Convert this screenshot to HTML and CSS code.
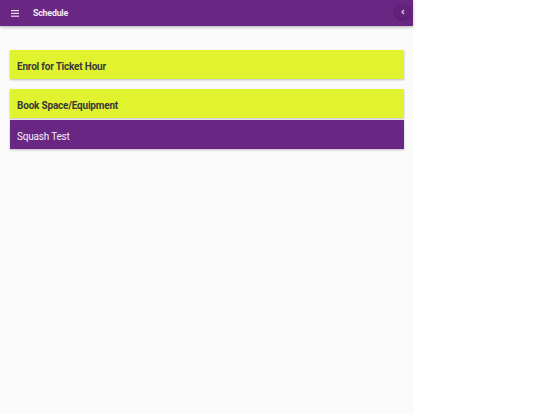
FILE: index.html
```
<!DOCTYPE html>
<html lang="en">
<head>
<meta charset="UTF-8">
<meta name="viewport" content="width=device-width, initial-scale=1.0">
<title>Schedule</title>
<link rel="stylesheet" href="styles.css">
</head>
<body>
  <div class="app">
    <!-- Toolbar -->
    <div class="toolbar">
      <svg class="menu-icon" width="8" height="7" viewBox="0 0 8 7">
        <rect x="0" y="0" width="8" height="1.2" fill="#ecdcf1"/>
        <rect x="0" y="2.8" width="8" height="1.2" fill="#ecdcf1"/>
        <rect x="0" y="5.6" width="8" height="1.2" fill="#ecdcf1"/>
      </svg>
      <span class="title">Schedule</span>
      <div class="side-toggle">
        <svg width="6" height="6" viewBox="0 0 6 6">
          <path d="M4 1 L2 3 L4 5" fill="none" stroke="#d9c3e3" stroke-width="1.3"/>
        </svg>
      </div>
    </div>

    <!-- Schedule list -->
    <div class="content">
      <div class="card card-yellow card-spaced">Enrol for Ticket Hour</div>
      <div class="card card-yellow">Book Space/Equipment</div>
      <div class="card card-purple">Squash Test</div>
    </div>
  </div>
</body>
</html>
```
FILE: styles.css
```
/* Page layout */
body {
  margin: 0;
  padding: 0;
  background-color: #ffffff;
  font-family: Roboto, "Noto Sans", sans-serif;
}
.app {
  position: relative;
  width: 413px;
  height: 414px;
  background-color: #fafafa;
}
.toolbar {
  display: flex;
  align-items: center;
  height: 26px;
  background-color: #692783;
  box-shadow: 0 1px 3px rgba(0, 0, 0, 0.3);
  position: relative;
}
.menu-icon {
  margin-left: 11px;
  display: block;
}
.title {
  margin-left: 14px;
  color: #f3e9f6;
  font-size: 8.8px;
  font-weight: 700;
  letter-spacing: -0.2px;
}
.side-toggle {
  position: absolute;
  top: 4px;
  left: 395px;
  width: 15px;
  height: 15px;
  border-radius: 50%;
  background-color: #63237c;
  box-shadow: 0 1px 3px rgba(0, 0, 0, 0.35);
  display: flex;
  align-items: center;
  justify-content: center;
}
.content {
  padding: 24px 9px 0 10px;
  display: flex;
  flex-direction: column;
  gap: 2px;
}
.card {
  height: 29px;
  display: flex;
  align-items: center;
  padding-left: 7px;
  padding-top: 3px;
  box-sizing: border-box;
  font-size: 10px;
  letter-spacing: -0.2px;
  box-shadow: 0 1px 2px rgba(0, 0, 0, 0.25);
}
.card-spaced {
  margin-bottom: 8px;
}
.card-yellow {
  background-color: #e1f22e;
  color: #383838;
  font-weight: 700;
}
.card-purple {
  background-color: #692783;
  color: #f6eef8;
}
```
